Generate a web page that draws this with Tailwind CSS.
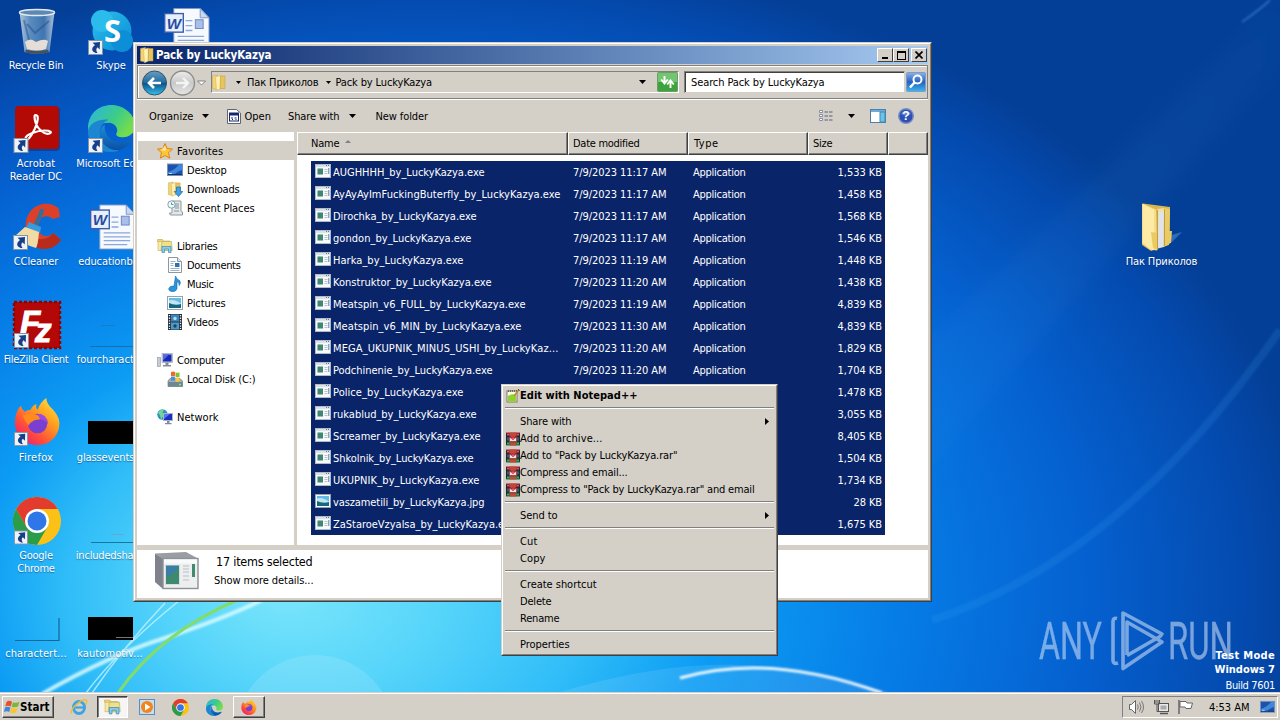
<!DOCTYPE html>
<html lang="en">
<head>
<meta charset="utf-8">
<title>Pack by LuckyKazya</title>
<script src="https://cdn.jsdelivr.net/npm/@tailwindcss/browser@4"></script>
</head>
<body class="overflow-hidden">
<div class="relative w-[1280px] h-[720px] overflow-hidden bg-[#0055c0] text-[11px] leading-[13px] text-black whitespace-nowrap font-['DejaVu_Sans_Condensed','DejaVu_Sans',sans-serif]">

<svg class="absolute inset-0" width="1280" height="720" viewBox="0 0 1280 720">
  <defs>
    <radialGradient id="sky" gradientUnits="userSpaceOnUse" cx="0" cy="0" r="1" fx="-0.18" fy="0" gradientTransform="translate(440 590) scale(880 640)">
      <stop offset="0" stop-color="#7be6fb"/><stop offset=".16" stop-color="#55d4fa"/><stop offset=".3" stop-color="#2fbcf8"/><stop offset=".42" stop-color="#0c9cf4"/><stop offset=".6" stop-color="#067ce6"/><stop offset=".78" stop-color="#0560cf"/><stop offset=".93" stop-color="#044aae"/><stop offset="1" stop-color="#043f97"/>
    </radialGradient>
    <linearGradient id="ray" x1="0" y1="1" x2="1" y2="0"><stop offset="0" stop-color="#4db4ff" stop-opacity="0"/><stop offset=".5" stop-color="#4db4ff" stop-opacity=".07"/><stop offset="1" stop-color="#4db4ff" stop-opacity=".03"/></linearGradient>
    <linearGradient id="fold" x1="0" x2="1"><stop offset="0" stop-color="#fbeeb0"/><stop offset=".45" stop-color="#e6c763"/><stop offset=".55" stop-color="#fdf3bd"/><stop offset="1" stop-color="#d9b34a"/></linearGradient>
    <linearGradient id="bin" x1="0" x2="1"><stop offset="0" stop-color="#dbe6ee"/><stop offset=".3" stop-color="#6f9fc9"/><stop offset=".7" stop-color="#4d81b5"/><stop offset="1" stop-color="#d6e2ea"/></linearGradient>
    <linearGradient id="edgeA" x1="0" y1="0" x2="1" y2=".5"><stop offset="0" stop-color="#2bb4e6"/><stop offset=".6" stop-color="#3ccb8a"/><stop offset="1" stop-color="#74dd4c"/></linearGradient>
    <linearGradient id="edgeB" x1="0" y1="0" x2="0" y2="1"><stop offset="0" stop-color="#1d8fd8"/><stop offset="1" stop-color="#0a4fa6"/></linearGradient>
    <linearGradient id="fox" x1="1" y1="0" x2=".2" y2="1"><stop offset="0" stop-color="#fff04a"/><stop offset=".4" stop-color="#ffa01e"/><stop offset=".75" stop-color="#ff4a3c"/><stop offset="1" stop-color="#e81e78"/></linearGradient>
    <linearGradient id="sk" x1="0" y1="0" x2="1" y2="1"><stop offset="0" stop-color="#2cc0ee"/><stop offset="1" stop-color="#0a8cd4"/></linearGradient>
    <filter id="soft"><feGaussianBlur stdDeviation="1.1"/></filter>
    <filter id="wide"><feGaussianBlur stdDeviation="10"/></filter>

    <symbol id="cut" viewBox="0 0 15 15"><rect width="15" height="15" fill="#8494a8"/><rect x="1" y="1" width="13" height="13" fill="#eef3fa"/><path d="M4.500 2.800l7.500-.8-.3 7.500-2.200-2.200C8 8.800 7.800 10.500 9.500 13 4.500 13 1.800 8.500 7 4.900z" fill="#173f86"/></symbol>

    <symbol id="folder" viewBox="0 0 16 16"><path d="M1.500 1.500l5-1v14.500l-5-1z" fill="#f0d37b" stroke="#c9a545" stroke-width=".5"/><path d="M4.500 2.500l5-1.500v13l-4 1.800z" fill="#fff1b0" stroke="#d3b153" stroke-width=".5"/><path d="M9.500 1.500h4.500v12.500H9z" fill="#e6c55e" stroke="#bf9a38" stroke-width=".5"/></symbol>
    <symbol id="exe" viewBox="0 0 16 14"><rect x=".5" y=".5" width="15" height="13" fill="#f7f9fa" stroke="#aebcc8"/><rect x="1" y="1" width="14" height="2" fill="#dbe3ea"/><path d="M11 1.500h1M13 1.500h1" stroke="#67788c"/><rect x="2.500" y="4.500" width="5.500" height="6" fill="#3f8770"/><path d="M9.500 5.500h3M9.500 7.500h3M9.500 9.500h3" stroke="#b8c3cd"/><path d="M13.800 4v6" stroke="#5e7fa6"/></symbol>
    <symbol id="pic" viewBox="0 0 16 14"><rect x=".5" y=".5" width="15" height="13" fill="#fdfdfd" stroke="#8fa3b5"/><rect x="2" y="2" width="12" height="10" fill="#64bbe5"/><path d="M2 4.500q5-2 12 3V12H2z" fill="#bfe6f2"/><path d="M2 7q6 3 12 1v4H2z" fill="#16687f"/></symbol>
    <symbol id="star" viewBox="0 0 16 16"><path d="M8 .5l2.200 5 5.300.6-4 3.600 1.200 5.500L8 12.500l-4.700 2.700 1.200-5.500-4-3.600 5.300-.6z" fill="#ffc53a" stroke="#dd8416"/><path d="M8 3l1.300 3.500L8 8 4 7z" fill="#ffe79a"/></symbol>
    <symbol id="desk" viewBox="0 0 16 14"><rect x=".5" y="1" width="15" height="11.500" fill="#1d52ac" stroke="#7692bb"/><path d="M1 9Q8 7 12 1.500h3V7Q9 9 7 12H1z" fill="#3f86dd"/><path d="M1 11.500h14" stroke="#16305f"/><path d="M2 10.500h3" stroke="#a8e4f5"/></symbol>
    <symbol id="down" viewBox="0 0 16 16"><use href="#folder" width="15" height="16"/><path d="M9.500 6h4v4.500h2.300l-4.300 5-4.300-5h2.300z" fill="#3f9fe4" stroke="#1768b0" stroke-width=".7"/></symbol>
    <symbol id="recent" viewBox="0 0 16 16"><path d="M5 1h9v10q0 1 1.500 1v3H4q-1.500 0-1.500-2H5z" fill="#e4e8ea" stroke="#8d999e"/><path d="M8 4h4M8 6h4M8 8h4M7 11h5" stroke="#7f9299"/><circle cx="4.500" cy="4.500" r="3.700" fill="#f1f8fa" stroke="#7aa6b0"/><path d="M4.500 2.500v2h2" stroke="#54707a" fill="none" stroke-width=".8"/></symbol>
    <symbol id="lib" viewBox="0 0 16 15"><path d="M.5 3V1h5l1 1.500H13V6z" fill="#f4d679" stroke="#c7a446" stroke-width=".6"/><rect x="1" y="3" width="11" height="9" fill="#fae99f" stroke="#cbb15a" stroke-width=".6"/><path d="M5 3h9.500l.7 9H4z" fill="#f2df86" stroke="#9fb266" stroke-width=".6"/><path d="M5 8h9v6h-2.500v-3.500h-4V14H5z" fill="#8bcdf0" stroke="#3d87b8" stroke-width=".7"/></symbol>
    <symbol id="docu" viewBox="0 0 14 16"><path d="M.5.500h9l4 4v11H.5z" fill="#fff" stroke="#8a97a5"/><path d="M9.500.5v4h4" fill="#dde6ee" stroke="#8a97a5"/><rect x="7" y="6" width="4.500" height="4" fill="#2e70b4"/><path d="M2.500 4.500h5M2.500 6.500h3M2.500 8.500h3M2.500 11.500h9M2.500 13.500h9" stroke="#9db3c9"/></symbol>
    <symbol id="note" viewBox="0 0 14 16"><path d="M7.500 0q1 3.500 4.200 4.600 1.600 2.400-.5 5Q11.500 6.600 9 5.800v6.700q-.5 3-4.500 3.200Q.5 15.300.8 12.600 1.600 9.600 6 10z" fill="#2a94dc" stroke="#1569b0" stroke-width=".6"/></symbol>
    <symbol id="film" viewBox="0 0 14 16"><rect width="14" height="16" fill="#27323c"/><rect x="3" y=".5" width="8" height="7" fill="#3f83bd"/><rect x="3" y="8.500" width="8" height="7" fill="#4d99c8"/><path d="M1.500 1v14M12.500 1v14" stroke="#eef" stroke-width="1.300" stroke-dasharray="1.300 1.300"/><circle cx="7" cy="4.500" r="1.700" fill="#a5e0f3"/><circle cx="7" cy="12" r="1.700" fill="#16436b"/></symbol>
    <symbol id="comp" viewBox="0 0 16 15"><rect x=".5" y="5" width="3" height="9" fill="#c7ccd2" stroke="#8b939c" stroke-width=".6"/><rect x="5" y="1" width="10.500" height="9" fill="#c3cadb" stroke="#98a1b1" stroke-width=".6"/><rect x="6" y="2" width="8.500" height="7" fill="#1629b8"/><path d="M6 2h6L6 8z" fill="#5268e6"/><path d="M8.500 10h3v2.500h2.500V14H6v-1.500h2.500z" fill="#838d9b"/></symbol>
    <symbol id="disk" viewBox="0 0 16 16"><path d="M1 10l2-2.500h10L15.500 10v5.500H1z" fill="#a3adb5" stroke="#606b75" stroke-width=".6"/><rect x="1" y="11" width="14.500" height="4.500" fill="#6f8791"/><path d="M12 13.500h2" stroke="#76f170" stroke-width="1.500"/><path d="M4 1q2.500-1 4 0v4.500q-2-1-4 0z" fill="#ef6a2b"/><path d="M8.500 1.200q2 1 4 0v4.500q-2 1-4 0z" fill="#7fc03e"/><path d="M4 6q2-1 4 0v4q-2-1-4 0z" fill="#4593df"/><path d="M8.500 6.300q2 1 4 0v4q-2 1-4 0z" fill="#fcc934"/></symbol>
    <symbol id="net" viewBox="0 0 16 16"><circle cx="5.500" cy="5.500" r="5.200" fill="#2991c0"/><path d="M1 3.500Q4-.5 7 .7L5.500 4 7 6 4 10.500 3 6.500z" fill="#70d696"/><rect x="6.500" y="4.500" width="9" height="7" fill="#1a2fc0" stroke="#a9b4cc"/><path d="M7 5h6l-6 5z" fill="#5c75e8"/><path d="M10 12h2.500v2h2v1.200H8V14h2z" fill="#7f8ba1"/></symbol>
    <symbol id="rar" viewBox="0 0 14 13"><rect width="14" height="4.300" fill="#a8203c"/><rect y="4.300" width="14" height="4.400" fill="#2d5f80"/><rect y="8.700" width="14" height="4.300" fill="#187b40"/><path d="M0 4.300h14M0 8.700h14" stroke="#161616"/><path d="M.5 1v11M13.500 1v11" stroke="#1c2a2a"/><path d="M3.500 0h7v3l-2 2h-3l-2-2zM3.500 13h7v-3h-7z" fill="#c4463a"/><path d="M3.500 4.500v4.500h7V4.500L8.500 6 7 4 5.500 6z" fill="#f4e2df" stroke="#c22b33" stroke-width=".8"/><path d="M7 3.500v4" stroke="#d3272e" stroke-width="1.400"/><path d="M2 1.500v1M12 1.500v1M2 10.500v1M12 10.500v1" stroke="#63e08e"/></symbol>
    <symbol id="npp" viewBox="0 0 14 14"><rect x="1" y="2" width="10" height="11" fill="#fbfbf0" stroke="#7c7860"/><path d="M2 7q4-3 8-1v6.500H2z" fill="#8ed22c"/><path d="M2 2h9" stroke="#5c5235" stroke-dasharray="1 1" stroke-width="1.500"/><path d="M13 .5L8 7" stroke="#c08a31" stroke-width="1.500"/><path d="M12 .5l1.500 1" stroke="#333"/></symbol>
    <symbol id="chrome" viewBox="0 0 48 48"><circle cx="24" cy="24" r="24" fill="#fbc116"/><path d="M3.200 12A24 24 0 0 0 24 48l10.400-18L24 24 13.600 30z" fill="#2a9c4a"/><path d="M24 12h20.800A24 24 0 0 0 3.200 12l10.400 18z" fill="#e33b2e"/><circle cx="24" cy="24" r="12" fill="#fff"/><circle cx="24" cy="24" r="9.500" fill="#2f77e8"/></symbol>
    <symbol id="edge" viewBox="0 0 48 48"><path d="M0 24C0 9 11 0 24 0s24 10 24 21c0 8-6 12-12 12-5 0-8-2-7-4 3-5-2-11-8-11C12 18 3 24 0 30z" fill="url(#edgeA)"/><path d="M0 26C2 18 12 14 21 15q-8 3-9 13c0 9 7 17 17 17l2 2C13 51-1 41 0 26z" fill="#1d86d2"/><path d="M17 20q-5 4-5 10c1 9 9 17 20 16 6-2 10-5 13-10-2 0-6 2-12 2-9 0-17-7-16-18z" fill="url(#edgeB)"/></symbol>
    <symbol id="firefox" viewBox="0 0 48 48"><path d="M7 8q1 4 4 6 3-2 6-2 1-4 6-6-1 4 1 6 3-8 9-12 0 6 7 12 8 9 6 18c-2 11-11 18-22 18C11 48 1 38 1 26 1 18 3 12 7 8z" fill="url(#fox)"/><circle cx="24" cy="26" r="10" fill="#7a3fd1"/><path d="M9 18q8-4 14-1 5 2 3 5-5 0-7 2-3 1-4 4-4-4-6-10z" fill="#ff8a1e"/><path d="M24 16q10 0 11 11-3-5-8-5z" fill="#9c4be0"/></symbol>
    <symbol id="word" viewBox="0 0 48 46"><path d="M10 .5h27L46 10v35.500H10z" fill="#f6f9fe" stroke="#7f97c6"/><path d="M37 .5V10h9z" fill="#c9d8f2" stroke="#7f97c6"/><path d="M22 13h7M22 18h7M22 23h7M14 29h27M14 33h27M14 37h27M14 41h24" stroke="#8ba7dc" stroke-width="1.300"/><rect x="32" y="12" width="8" height="9" fill="#a9bfe8" stroke="#6b89c8"/><rect x=".7" y="5.700" width="19" height="19" fill="#e8effc" stroke="#3a5cab" stroke-width="1.400"/><text x="10" y="21" text-anchor="middle" font-family="Liberation Sans,sans-serif" font-weight="bold" font-style="italic" font-size="15.500" fill="#274b9f">W</text></symbol>
  </defs>

  <rect width="1280" height="720" fill="url(#sky)"/>
  <path d="M700 560L1280 0v60L800 620z" fill="url(#ray)" filter="url(#wide)"/>
  <path d="M932 620Q1120 560 1280 330" stroke="#3ba0f5" stroke-opacity=".16" stroke-width="8" fill="none" filter="url(#soft)"/>
  <path d="M1242 22Q1262 8 1270 0" stroke="#5aa8f0" stroke-opacity=".4" stroke-width="2" fill="none" filter="url(#soft)"/>
  <circle cx="315" cy="735" r="80" fill="#fff" fill-opacity=".13"/>
  <path d="M560 692Q700 650 800 672T890 692z" fill="#fff" fill-opacity=".1"/>
  <path d="M680 678Q770 652 882 693" stroke="#fff" stroke-opacity=".9" stroke-width="3" fill="none" filter="url(#soft)"/>
  <path d="M42 694Q110 655 165 638Q225 618 262 600" stroke="#d9fbff" stroke-width="4" stroke-opacity=".85" fill="none" filter="url(#soft)"/>
  <path d="M86 693Q118 650 180 600M92 693Q125 645 165 603" stroke="#c8f5ff" stroke-width="1.500" stroke-opacity=".75" fill="none"/>
  <path d="M118 693Q160 632 242 598" stroke="#82dc6c" stroke-width="3" fill="none"/>

  <!-- desktop icons -->
  <g>
    <path d="M19.500 12h35l-5 40q-12 4-25 0z" fill="url(#bin)" fill-opacity=".8"/><ellipse cx="37" cy="12.500" rx="17.500" ry="3" fill="#5b88b5" stroke="#e3e9ee" stroke-width="1.500"/><path d="M25 42q5-5 11 0 8-4 12-1l-2 8q-9 3-19 0z" fill="#e4ded6"/><path d="M27 24l8 9 14-12M24 20l5 20" stroke="#264f8a" stroke-opacity=".5" stroke-width="2" fill="none"/><path d="M25.500 51q12 3 23 0" stroke="#4b4e54" stroke-width="2.500" fill="none"/>
    <circle cx="112" cy="31" r="19.500" fill="url(#sk)"/><circle cx="102" cy="21" r="11" fill="#2bbcec"/><circle cx="122" cy="41" r="11" fill="#0c8fd6"/><text x="112.500" y="42" text-anchor="middle" font-family="Open Sans,sans-serif" font-weight="bold" font-size="31" fill="#fff">S</text>
    <use href="#cut" x="88" y="40" width="15" height="15"/>
    <use href="#word" x="164" y="8" width="47" height="45"/>
    <rect x="16" y="107" width="44" height="44" rx="4" fill="#04225e" fill-opacity=".4"/><rect x="15" y="106" width="44" height="43" rx="4" fill="#b40a05"/><path d="M35.500 115c5 0 1 12-4 20-3 5-6 6-6 3.500 0-4 12-8 19-8 6 0 8 2 5 3-5 2-12-5-14-11-1-4-1.500-7.500 0-7.500z" fill="none" stroke="#fff" stroke-width="2.200"/>
    <use href="#cut" x="13" y="138" width="16" height="15"/>
    <use href="#edge" x="88" y="105" width="47" height="47"/><use href="#cut" x="88" y="138" width="15" height="15"/>
    <path d="M58.500 208A20.500 21.500 0 1 0 61 240l-7.500-7a9.500 10 0 1 1-.5-14l7-2z" fill="#dd4029"/><path d="M61 240a20 20 0 0 1-30 4l5-6q9 4 17.500-5z" fill="#b92c1c"/><path d="M40.500 208.500l4 1-6 17-5-1.500z" fill="#3b6c96"/><path d="M29 222l12 5-1 6-14-5z" fill="#3a9bdc"/><path d="M25 227l14 5q-1 13-3 16-14-4-21-12z" fill="#f2dca6"/>
    <use href="#cut" x="13" y="235" width="15" height="15"/>
    <use href="#word" x="90" y="204" width="47" height="46"/>
    <rect x="14" y="302" width="46" height="46" fill="#b40808" stroke="#8c0505" stroke-width="2.500" stroke-dasharray="3 2"/><text x="20" y="334" font-family="Liberation Sans,sans-serif" font-weight="bold" font-style="italic" font-size="33" textLength="25" fill="#fff" stroke="#fff">F</text><text x="35" y="342" font-family="Liberation Sans,sans-serif" font-weight="bold" font-style="italic" font-size="33" fill="#fff" stroke="#fff">z</text>
    <use href="#cut" x="14" y="333" width="15" height="15"/>
    <path d="M90 346.500h50" stroke="#1b6ea8" stroke-width="1"/><path d="M101 325.500h14" stroke="#2272ac" stroke-opacity=".6"/>
    <use href="#firefox" x="14" y="398" width="47" height="47"/><use href="#cut" x="14" y="432" width="14" height="14"/>
    <rect x="88" y="421" width="48" height="23" fill="#000"/>
    <use href="#chrome" x="13" y="497" width="48" height="48"/><use href="#cut" x="14" y="530" width="14" height="15"/>
    <path d="M91 542.500h48" stroke="#15799f"/><path d="M112 534.500h12" stroke="#64a9c5"/>
    <path d="M15 640.500h44V618" stroke="#12679c" stroke-width="1.200" fill="none"/>
    <rect x="88" y="617" width="45" height="23" fill="#000"/><path d="M116 637.500h17" stroke="#777"/>
    <path d="M1168 236l14-4-10 10-14 6z" fill="#6fb3e8" fill-opacity=".4"/>
    <path d="M1143 203.500l27 3.500-1 38-18 6-9-6z" fill="#d8b650"/><path d="M1142 203.500l14 6 1 41-7-1-8-6z" fill="#f6dc86"/><path d="M1143 204l11 6v40l-4-1-7-6z" fill="#fdeaa6"/><path d="M1157 209l8-1v38l-8 2z" fill="#efe0a0"/><path d="M1159 211l5 1v35l-6 1z" fill="#dfe3ee"/><path d="M1164 208l6 1-.5 35-6 3z" fill="#e9cb68"/><path d="M1151 232l7 1v17l-5-2zM1166 231h6l-1 12-6 1z" fill="#ebca62"/><path d="M1157.500 210v40M1164.500 209v37" stroke="#b8923a" stroke-width=".8"/>
  </g>

  <!-- watermark -->
  <g opacity=".52">
    <g fill="#e4eefb" font-family="Roboto,sans-serif" font-size="52" font-weight="400" stroke="#e4eefb" stroke-width=".3"><text x="1039" y="659" textLength="63" lengthAdjust="spacingAndGlyphs">ANY</text><text x="1168" y="659" textLength="65" lengthAdjust="spacingAndGlyphs">RUN</text></g>
    <path d="M1117 618.500q-4-1-4 3v39q0 4 5 2.500M1127 655V622l35 20-39 26.500V613l39 21-2 2.500-33 19" fill="none" stroke="#e4eefb" stroke-width="3.600" stroke-linejoin="round"/>
  </g>
</svg>

<!-- desktop labels -->
<div id="labels" class="text-white [text-shadow:0_1px_1px_rgba(0,20,70,.45)]"></div>
<div class="absolute right-[5px] top-[649px] text-white text-right">
  <div class="h-[14px] font-bold"><span data-w="59">Test Mode</span></div>
  <div class="h-[16px] font-bold"><span data-w="60">Windows 7</span></div>
  <div><span data-w="49">Build 7601</span></div>
</div>

<!-- explorer window -->
<div class="absolute left-[133px] top-[42px] w-[799px] h-[560px] bg-[#d4d0c8] border border-[#d4d0c8] border-r-[#404040] border-b-[#404040]">
<div class="w-full h-full border border-white border-r-[#808080] border-b-[#808080] p-[2px] flex flex-col">
  <div class="h-[18px] flex items-center pl-[2px] pr-[1px] bg-linear-to-r from-[#0a246a] to-[#a6caf0] text-white font-bold">
    <svg width="16" height="16"><use href="#folder"/></svg>
    <span class="ml-[1px] text-[11.5px]" data-w="115">Pack by LuckyKazya</span>
    <div class="ml-auto flex h-[14px]">
      <div class="w-[16px] bg-[#d4d0c8] border border-white border-r-[#404040] border-b-[#404040] flex items-end justify-center pb-[2px]"><i class="block w-[6px] h-[2px] bg-black"></i></div>
      <div class="w-[16px] bg-[#d4d0c8] border border-white border-r-[#404040] border-b-[#404040] flex items-center justify-center"><i class="block w-[9px] h-[9px] border border-black border-t-2"></i></div>
      <div class="ml-[2px] w-[16px] bg-[#d4d0c8] border border-white border-r-[#404040] border-b-[#404040] flex items-center justify-center"><svg width="8" height="8"><path d="M.5.500l7 7M7.500.500l-7 7" stroke="#000" stroke-width="1.700"/></svg></div>
    </div>
  </div>
  <div class="mt-[1px] h-[34px] border border-[#808080] shadow-[inset_1px_1px_0_#fff,0_1px_0_#fff] flex items-center">
    <svg width="66" height="30" viewBox="0 0 66 30" class="ml-[3px] shrink-0">
      <defs><linearGradient id="bk" x1="0" y1="0" x2="0" y2="1"><stop offset="0" stop-color="#6a9cc0"/><stop offset=".48" stop-color="#1f6ca0"/><stop offset=".5" stop-color="#0b5084"/><stop offset="1" stop-color="#35c0f0"/></linearGradient><linearGradient id="fw" x1="0" y1="0" x2="0" y2="1"><stop offset="0" stop-color="#ededed"/><stop offset=".5" stop-color="#c9c9c9"/><stop offset="1" stop-color="#e6e6e6"/></linearGradient></defs>
      <circle cx="13.500" cy="16" r="12" fill="url(#bk)" stroke="#33536e"/><circle cx="41.500" cy="16" r="12" fill="url(#fw)" stroke="#8c8c8c" stroke-width="1.300"/>
      <path d="M20 16H8.500M13 11l-5 5 5 5" stroke="#fff" stroke-width="2.600" fill="none"/><path d="M35 16h11.500M42 11l5 5-5 5" stroke="#f4f4f4" stroke-width="2.400" fill="none"/><path d="M56.500 14h8l-4 4z" fill="#fff" stroke="#777" stroke-width=".9"/>
    </svg>
    <div class="ml-[4px] w-[468px] h-[22px] shrink-0 border border-[#808080] border-r-white border-b-white flex items-center">
      <svg width="16" height="17" class="-ml-[1px]"><use href="#folder"/></svg>
      <svg width="5" height="3" class="ml-[9px]"><path d="M0 0h5L2.500 3z"/></svg>
      <span class="ml-[6px]" data-w="71">Пак Приколов</span>
      <svg width="5" height="3" class="ml-[7px]"><path d="M0 0h5L2.500 3z"/></svg>
      <span class="ml-[5px]" data-w="96">Pack by LuckyKazya</span>
      <svg width="7" height="4" class="ml-auto mr-[11px]"><path d="M0 0h7L3.500 4z"/></svg>
      <svg width="21" height="20"><rect x=".5" y=".5" width="20" height="19" rx="1" fill="#3da33c" stroke="#6f9c6d"/><rect x="1" y="1" width="19" height="9" fill="#72c66f"/><path d="M7.500 4v7M4.200 7.500L7.500 11.500l3.300-4M13.500 16V9M10.200 12.500L13.500 8.500l3.300 4" stroke="#fff" stroke-width="1.900" fill="none"/></svg>
    </div>
    <div class="ml-[5px] w-[221px] h-[22px] shrink-0 bg-white border border-[#808080] border-r-[#d4d0c8] border-b-[#d4d0c8] shadow-[inset_1px_1px_0_#404040] flex items-center pl-[6px] pt-[1px]"><span data-w="133">Search Pack by LuckyKazya</span></div>
    <svg width="20" height="20" class="ml-[1px] shrink-0"><defs><linearGradient id="sb" x1="0" y1="0" x2="0" y2="1"><stop offset="0" stop-color="#8fb2e8"/><stop offset=".5" stop-color="#2460c0"/><stop offset="1" stop-color="#3fb8ee"/></linearGradient></defs><rect x=".5" y=".5" width="19" height="19" rx="1" fill="url(#sb)" stroke="#7d9cc6"/><circle cx="11.500" cy="7.500" r="4" fill="none" stroke="#fff" stroke-width="2"/><path d="M8.500 10.500L4 15.500" stroke="#fff" stroke-width="2.500"/></svg>
  </div>
  <div class="h-[33px] flex items-center pl-[12px] pr-[14px] pt-[1px]">
    <span data-w="44">Organize</span>
    <svg width="7" height="4" class="ml-[8px]"><path d="M0 0h7L3.500 4z"/></svg>
    <svg width="14" height="15" class="ml-[18px]"><path d="M.5.500h9l4 3.500v10.500H.5z" fill="#fff" stroke="#5e6670"/><rect x="2.500" y="4" width="9" height="8" fill="#fff" stroke="#14296d"/><rect x="2" y="4" width="10" height="2.500" fill="#14296d"/><path d="M4 9h2M7.500 9h2M5 10.500h1M8.500 10.500h1" stroke="#14296d"/></svg>
    <span class="ml-[4px]" data-w="26">Open</span>
    <span class="ml-[17px]" data-w="51">Share with</span>
    <svg width="7" height="4" class="ml-[9px]"><path d="M0 0h7L3.500 4z"/></svg>
    <span class="ml-[20px]" data-w="52">New folder</span>
    <svg width="15" height="12" class="ml-auto"><path d="M.5.500h3v2h-3zM.5 4.500h3v2h-3zM.5 8.500h3v2h-3z" fill="#fff" stroke="#7b83a0" stroke-width=".9"/><path d="M5.500 2h9M5.500 6h9M5.500 10h9" stroke="#5b607a" stroke-dasharray="3.500 1"/></svg>
    <svg width="7" height="4" class="ml-[14px]"><path d="M0 0h7L3.500 4z"/></svg>
    <svg width="16" height="14" class="ml-[15px]"><rect x=".5" y=".5" width="15" height="13" fill="#fff" stroke="#4e7fa8"/><rect x="1" y="1" width="14" height="2" fill="#6badd6"/><rect x="10" y="3" width="5" height="10" fill="#6cc3e6" stroke="#3e87b5"/></svg>
    <svg width="16" height="16" class="ml-[12px]"><circle cx="8" cy="8" r="7.300" fill="#2c50b4" stroke="#7b8fc4" stroke-width="1.400"/><path d="M3 6a5.500 5 0 0 1 10 0q-5 3-10 0z" fill="#7f9be0" fill-opacity=".7"/><text x="8" y="12.300" text-anchor="middle" font-family="Liberation Sans,sans-serif" font-weight="bold" font-size="12" fill="#fff">?</text></svg>
  </div>
  <div class="h-[413px] flex bg-white">
    <div id="nav" class="w-[158px] pt-[9px] pl-[1px]"></div>
    <div class="w-[3px] bg-[#d4d0c8]"></div>
    <div class="flex-1">
      <div class="h-[23px] flex bg-[#d4d0c8]">
        <div class="w-[271px] border border-white border-r-[#404040] border-b-[#404040] shadow-[inset_-1px_-1px_0_#808080] flex items-center pl-[13px]"><span data-w="28">Name</span><svg width="6" height="3" class="ml-[5px] -mt-[4px]"><path d="M0 3h6L3 0z" fill="#808080"/></svg></div>
        <div class="w-[120px] border border-white border-r-[#404040] border-b-[#404040] shadow-[inset_-1px_-1px_0_#808080] flex items-center pl-[4px]"><span data-w="66">Date modified</span></div>
        <div class="w-[120px] border border-white border-r-[#404040] border-b-[#404040] shadow-[inset_-1px_-1px_0_#808080] flex items-center pl-[5px]"><span data-w="24">Type</span></div>
        <div class="w-[80px] border border-white border-r-[#404040] border-b-[#404040] shadow-[inset_-1px_-1px_0_#808080] flex items-center pl-[4px]"><span data-w="19">Size</span></div>
        <div class="w-[40px] border border-white border-r-[#404040] border-b-[#404040] shadow-[inset_-1px_-1px_0_#808080]"></div>
      </div>
      <div id="files" class="mt-[6px] ml-[14px] w-[574px] bg-[#0a246a] text-white"></div>
    </div>
  </div>
  <div class="h-[5px] bg-[#d4d0c8]"></div>
  <div class="flex-1 bg-white flex pl-[18px] pt-[2px]">
    <svg width="44" height="38" viewBox="0 0 44 38"><path d="M0 1.500L31 0l12 6.500H8z" fill="#9a9da4"/><path d="M0 1.500l8 5V37l-8-7z" fill="#7f828a"/><rect x="8" y="6.500" width="35" height="30" fill="#eceef0" stroke="#8e9198" stroke-width="1.400"/><rect x="9" y="7.500" width="33" height="4" fill="#f9fafc"/><rect x="10.500" y="13.500" width="14" height="19" fill="#3d8a6e" stroke="#d7dcdf"/><path d="M11 25q8-2 13-11v-.5H11z" fill="#3b7ea4"/><path d="M28 14h6M28 17h6M28 20h6M28 24h6M28 28h6" stroke="#b7bfc6"/><rect x="37" y="12" width="3" height="13" fill="#43896c"/></svg>
    <div class="pl-[15px] pt-[3px]">
      <div class="pl-[2px] text-[12.5px] leading-[14px]"><span data-w="96">17 items selected</span></div>
      <div class="mt-[5px]"><span data-w="99">Show more details...</span></div>
    </div>
  </div>
</div>
</div>

<!-- context menu -->
<div class="absolute left-[501px] top-[384px] w-[277px] h-[272px] bg-[#d4d0c8] border border-[#d4d0c8] border-r-[#404040] border-b-[#404040]">
  <div id="menu" class="w-full h-full border border-white border-r-[#808080] border-b-[#808080] p-px"></div>
</div>

<!-- taskbar -->
<div class="absolute left-0 top-[692px] w-[1280px] h-[28px] bg-[#d4d0c8] border-t border-[#d4d0c8] shadow-[inset_0_1px_0_#fff] flex items-center pt-[1px] pl-[2px] pr-[2px]">
  <div class="w-[52px] h-[22px] border border-white border-r-[#404040] border-b-[#404040] shadow-[inset_-1px_-1px_0_#808080] flex items-center pl-[1px] font-bold">
    <svg width="16" height="16"><path d="M2.500 3Q5 .8 8 2.800L6.800 7.500Q4 6 1.200 7.500z" fill="#e8502a"/><path d="M8.800 3.200q3 1.500 6.700-.5L14 7.500q-3 1.500-6.300.3z" fill="#79b83a"/><path d="M1 8.500q2.500-1.500 5.500 0L5.200 13Q3 11.500 0 13z" fill="#3e86d8"/><path d="M7.400 8.800q3 1.500 6.200 0L12 13.500q-3 1.500-6 0z" fill="#fcc42c"/></svg>
    <span class="text-[11.5px]" data-w="29">Start</span>
  </div>
  <svg width="18" height="18" class="ml-[16px]"><ellipse cx="9" cy="9.500" rx="5.600" ry="6" fill="none" stroke="#3fa4e4" stroke-width="2.800"/><path d="M4 9.500h11" stroke="#3fa4e4" stroke-width="2.200"/><path d="M1.500 15.500Q0 12 7 6T16.500 2.500q.8 1.200-1 4" fill="none" stroke="#f0bd32" stroke-width="1.500"/></svg>
  <div class="ml-[9px] w-[31px] h-[22px] bg-[#f6f5f3] border border-[#404040] border-r-white border-b-white shadow-[inset_1px_1px_0_#808080] flex items-center justify-center"><svg width="17" height="16"><use href="#lib"/></svg></div>
  <svg width="16" height="16" class="ml-[11px]"><rect x=".5" y=".5" width="15" height="15" fill="#c5def2" stroke="#5590c4"/><circle cx="8" cy="8" r="6" fill="#f58318"/><path d="M6 4.500v7l5.500-3.500z" fill="#fff"/></svg>
  <svg width="17" height="17" class="ml-[17px]"><use href="#chrome"/></svg>
  <svg width="17" height="17" class="ml-[17px]"><use href="#edge"/></svg>
  <div class="ml-[10px] w-[32px] h-[22px] border border-white border-r-[#404040] border-b-[#404040] shadow-[inset_-1px_-1px_0_#808080] flex items-center justify-center"><svg width="16" height="16"><use href="#firefox"/></svg></div>
  <div class="ml-auto w-[156px] h-[22px] border border-[#808080] border-r-white border-b-white flex items-center pl-[5px] pr-[2px]">
    <svg width="17" height="16"><path d="M1.500 5.500h2l4-4v13l-4-4h-2z" fill="#fff" stroke="#666"/><path d="M9.500 5.500q1.500 2.500 0 5M11.500 3.500q3 4.500 0 9M13.500 2q4 6 0 12" fill="none" stroke="#777"/></svg>
    <svg width="17" height="16" class="ml-[8px]"><rect x="5.500" y="4.500" width="10" height="8" fill="#e8e8e8" stroke="#555"/><rect x="7.500" y="6.500" width="6" height="4" fill="#aaa"/><path d="M7 14.500h8" stroke="#555" stroke-width="1.500"/><path d="M1.500 1v4h5V1M3 1v3M5 1v3M4 5v7.500h2" fill="none" stroke="#555"/></svg>
    <svg width="17" height="16" class="ml-[7px]"><path d="M2 1v14" stroke="#666" stroke-width="1.500"/><path d="M3 2.500h6l1 1.500h5.500L14 9.500H9L8 8H3z" fill="#fff" stroke="#666"/></svg>
    <span class="ml-[15px]" data-w="40">4:53 AM</span>
    <svg width="15" height="14" class="ml-auto"><use href="#desk"/></svg>
  </div>
</div>
</div>

<script>
const el = id => document.getElementById(id);

// [text, centre x, top y, width]
const labels = [
  ['Recycle Bin',36,59,54],['Skype',111,59,29],['Acrobat',36,157,38],['Reader DC',36,170,52],['Microsoft Edge',112,157,71],
  ['CCleaner',36,255,44],['educationb...',110,255,63],['FileZilla Client',36,353,64],['fourcharact...',110,353,66],
  ['Firefox',36,451,34],['glassevents...',110,451,66],['Google',36,549,33],['Chrome',36,562,37],['includedsha...',109,549,66],
  ['charactert...',36,647,61],['kautomotiv...',110,647,65],['Пак Приколов',1161.5,255,71]
];
el('labels').innerHTML = labels.map(([t,x,y,w]) =>
  `<div class="absolute w-[100px] text-center" style="left:${x-50}px;top:${y}px"><span data-w="${w}">${t}</span></div>`).join('');

// [text, icon, level, width]; null is a blank row
const nav = [['Favorites','star',0,46],['Desktop','desk',1,39],['Downloads','down',1,52],['Recent Places','recent',1,67],null,
  ['Libraries','lib',0,40],['Documents','docu',1,53],['Music','note',1,26],['Pictures','pic',1,38],['Videos','film',1,31],null,
  ['Computer','comp',0,47],['Local Disk (C:)','disk',1,68],null,['Network','net',0,41]];
el('nav').innerHTML = nav.map((n,i) => !n ? '<div class="h-[19px]"></div>' :
  `<div class="h-[19px] flex items-center gap-[4px] ${n[2] ? 'pl-[29px]' : 'pl-[19px]'} ${i ? '' : 'bg-[#d4d0c8]'}"><svg width="16" height="16"><use href="#${n[1]}"/></svg><span class="pt-[2px]" data-w="${n[3]}">${n[0]}</span></div>`).join('');

const files = [
  ['AUGHHHH_by_LuckyKazya.exe',151,'11:17','1,533'],['AyAyAyImFuckingButerfly_by_LuckyKazya.exe',227,'11:17','1,458'],
  ['Dirochka_by_LuckyKazya.exe',143,'11:17','1,568'],['gondon_by_LuckyKazya.exe',138,'11:17','1,546'],
  ['Harka_by_LuckyKazya.exe',130,'11:19','1,448'],['Konstruktor_by_LuckyKazya.exe',158,'11:20','1,438'],
  ['Meatspin_v6_FULL_by_LuckyKazya.exe',192,'11:19','4,839'],['Meatspin_v6_MIN_by_LuckyKazya.exe',188,'11:30','4,839'],
  ['MEGA_UKUPNIK_MINUS_USHI_by_LuckyKaz...',225,'11:20','1,829'],['Podchinenie_by_LuckyKazya.exe',159,'11:20','1,704'],
  ['Police_by_LuckyKazya.exe',130,'11:20','1,478'],['rukablud_by_LuckyKazya.exe',143,'11:20','3,055'],
  ['Screamer_by_LuckyKazya.exe',147,'11:20','8,405'],['Shkolnik_by_LuckyKazya.exe',140,'11:20','1,504'],
  ['UKUPNIK_by_LuckyKazya.exe',146,'11:20','1,734'],['vaszametili_by_LuckyKazya.jpg',151,'11:20','28'],
  ['ZaStaroeVzyalsa_by_LuckyKazya.exe',182,'11:20','1,675']];
// rows past this index show their date and type under the context menu
const covered = 10;
el('files').innerHTML = files.map(([n,w,t,s],i) => {
  const jpg = n.endsWith('jpg');
  return `<div class="h-[22px] flex items-center pl-[4px] pr-[3px]"><svg width="16" height="14" class="-mt-[3px]"><use href="#${jpg ? 'pic' : 'exe'}"/></svg><div class="pl-[2px] w-[242px]"><span data-w="${w}">${n}</span></div><div class="w-[120px]">${i < covered ? `<span data-w="93">7/9/2023 ${t} AM</span>` : ''}</div><div class="w-[60px]">${i < covered ? '<span data-w="52">Application</span>' : ''}</div><div class="flex-1 text-right"><span data-w="${s.length > 2 ? 44 : 28}">${s} KB</span></div></div>`;
}).join('');

// [text, width, icon, has submenu]; null is a separator
const menu = [['Edit with Notepad++',117,'npp'],null,['Share with',51,'',1],['Add to archive...',82,'rar'],['Add to "Pack by LuckyKazya.rar"',157,'rar'],
  ['Compress and email...',107,'rar'],['Compress to "Pack by LuckyKazya.rar" and email',234,'rar'],null,['Send to',37,'',1],null,
  ['Cut',17],['Copy',25],null,['Create shortcut',76],['Delete',31],['Rename',39],null,['Properties',49]];
el('menu').innerHTML = menu.map((m,i) => !m ?
  '<div class="h-[9px] pt-[3px] px-px"><div class="h-[2px] border-t border-[#808080] border-b border-b-white"></div></div>' :
  `<div class="h-[17px] flex items-center pl-[2px] pr-[6px] ${i ? '' : 'font-bold'}"><div class="w-[14px]">${m[2] ? `<svg width="14" height="14"><use href="#${m[2]}"/></svg>` : ''}</div><span data-w="${m[1]}">${m[0]}</span>${m[3] ? '<svg width="4" height="7" class="ml-auto"><path d="M0 0v7l4-3.500z"/></svg>' : ''}</div>`).join('');

function fit() {
  document.querySelectorAll('[data-w]').forEach(s => {
    s.style.letterSpacing = '0px';
    const n = s.textContent.length;
    let ls = 0;
    for (let k = 0; k < 3; k++) {
      ls += (+s.dataset.w + 0.5 - s.getBoundingClientRect().width) / n;
      s.style.letterSpacing = ls.toFixed(3) + 'px';
    }
  });
}
fit();
addEventListener('load', fit);
document.fonts.ready.then(fit);
requestAnimationFrame(() => requestAnimationFrame(fit));
new ResizeObserver(fit).observe(document.querySelector('#nav'));
[30, 100, 250].forEach(t => setTimeout(fit, t));
</script>
</body>
</html>
